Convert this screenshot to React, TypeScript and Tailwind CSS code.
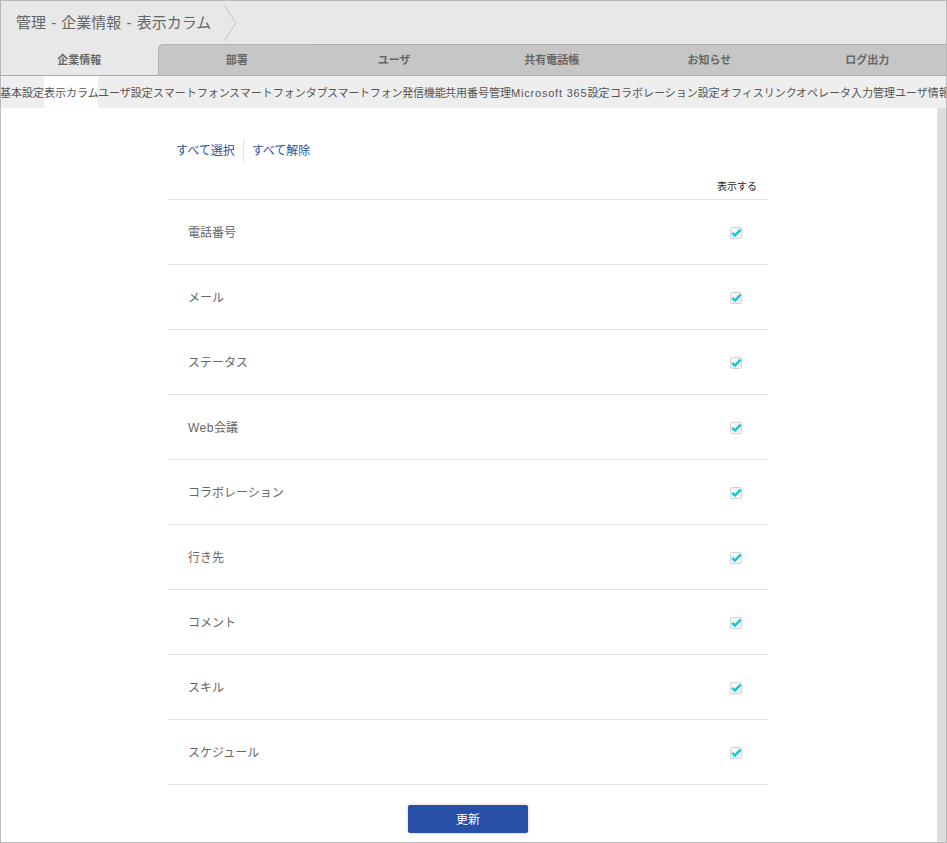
const font = "[font-family:'Liberation_Sans','Noto_Sans_CJK_JP',sans-serif]";

const mainTabs = ["企業情報", "部署", "ユーザ", "共有電話帳", "お知らせ", "ログ出力"];
const subTabs = [
  { label: "基本設定", w: "w-[44px]" },
  { label: "表示カラム", w: "w-[54px]" },
  { label: "ユーザ設定", w: "w-[55px]" },
  { label: "スマートフォン", w: "w-[76px]" },
  { label: "スマートフォンタブ", w: "w-[98px]" },
  { label: "スマートフォン発信機能", w: "w-[118px] tracking-[-0.2px]" },
  { label: "共用番号管理", w: "w-[66px]" },
  { label: "Microsoft 365設定", w: "w-[99px]" },
  { label: "コラボレーション設定", w: "w-[110px]" },
  { label: "オフィスリンク", w: "w-[76px]" },
  { label: "オペレータ入力管理", w: "w-[99px]" },
  { label: "ユーザ情報", w: "w-[55px]" },
];
const rows = ["電話番号", "メール", "ステータス", "Web会議", "コラボレーション", "行き先", "コメント", "スキル", "スケジュール"];

function CheckBox() {
  return (
    <span className="relative mt-[1px] block h-[12px] w-[12px] rounded-[2px] border border-[#d4d4d4] bg-[#f6f6f6]">
      <svg className="absolute left-[0px] top-[0px] overflow-visible" width="10" height="10" viewBox="0 0 10 10" fill="none">
        <path d="M1.2 4.8 L3.9 7.6 L9.6 1.6" stroke="#10c6d8" strokeWidth="2.4" />
      </svg>
    </span>
  );
}

export default function App() {
  return (
    <div className={`${font} box-border flex h-[843px] w-[947px] flex-col overflow-hidden border border-[#b9b9b9] bg-white`}>
      <header className="flex h-[43px] shrink-0 items-center bg-[#e8e8e8] pl-[15px]">
        <h1 className="text-[15px] font-normal leading-[40px] text-[#666] [word-spacing:1px]">管理 - 企業情報 - 表示カラム</h1>
        <svg className="ml-[13px]" width="13" height="36" viewBox="0 0 13 36" fill="none">
          <path d="M0.5 0.5 L12 18 L0.5 35.5" stroke="#c0c0c0" strokeWidth="1" />
        </svg>
      </header>

      <nav className="grid h-[32px] shrink-0 grid-cols-[156.5px_repeat(5,1fr)] border-b border-[#acacac] bg-[#e8e8e8]">
        {mainTabs.map((t, i) => (
          <div
            key={t}
            className={
              i === 0
                ? "flex items-center justify-center pt-[2px] text-[11px] font-bold text-[#666]"
                : i === 1
                  ? "relative flex items-center justify-center rounded-tl-[5px] border-l border-t border-[#b4b4b4] bg-[#c6c6c6] pt-[1px] text-[11px] font-bold text-[#666]"
                  : "flex items-center justify-center border-t border-[#acacac] bg-[#c6c6c6] pt-[1px] text-[11px] font-bold text-[#666]"
            }
          >
            {i === 1 && (
              <svg className="absolute bottom-0 left-[-4px]" width="4" height="4" viewBox="0 0 4 4">
                <path d="M0 4 Q3.5 4 4 0 L4 4 Z" fill="#b8b8b8" />
              </svg>
            )}
            {t}
          </div>
        ))}
      </nav>

      <nav className="-ml-px flex h-[32px] shrink-0 overflow-hidden bg-[#eeeeee]">
        {subTabs.map((t, i) => (
          <div
            key={t.label}
            className={`flex shrink-0 items-center whitespace-nowrap pt-[3px] text-[11px] text-[#555] ${t.w} ${i === 1 ? "bg-white" : ""}`}
          >
            {t.label.startsWith("Microsoft") ? (
              <>
                <span className="tracking-[0.8px]">Microsoft 365</span>設定
              </>
            ) : (
              t.label
            )}
          </div>
        ))}
      </nav>

      <div className="flex min-h-0 flex-1">
        <main className="min-w-0 flex-1 bg-white">
          <div className="ml-[167px] w-[600px]">
            <div className="mt-[31px] flex h-[23px] items-center pl-[8px] text-[12px] text-[#2a50a5]">
              <span className="pr-[8px]">すべて選択</span>
              <span className="border-l border-[#e2e2e2] pl-[8px] leading-[22px]">すべて解除</span>
            </div>
            <div className="flex h-[38px] items-end justify-end border-b border-[#e2e2e2] pb-[5px] pr-[11px] text-[10px] leading-[14px] text-[#222]">
              表示する
            </div>
            {rows.map((r) => (
              <div key={r} className="flex h-[65px] items-center justify-between border-b border-[#e2e2e2] pl-[20px] pr-[26px] text-[12px] text-[#666]">
                <span className="mt-[1px]">
                  {r.startsWith("Web") ? (
                    <>
                      <span className="tracking-[0.5px]">Web</span>会議
                    </>
                  ) : (
                    r
                  )}
                </span>
                <CheckBox />
              </div>
            ))}
            <div className="flex justify-center pt-[20px]">
              <button className="h-[28px] w-[120px] rounded-[2px] bg-[#2850a8] pt-[1px] text-[12px] text-white shadow-[0_0_3px_rgba(0,0,0,0.25)]">
                更新
              </button>
            </div>
          </div>
        </main>
        <div className="w-[9px] shrink-0 bg-[#dddddd]" />
      </div>
    </div>
  );
}
